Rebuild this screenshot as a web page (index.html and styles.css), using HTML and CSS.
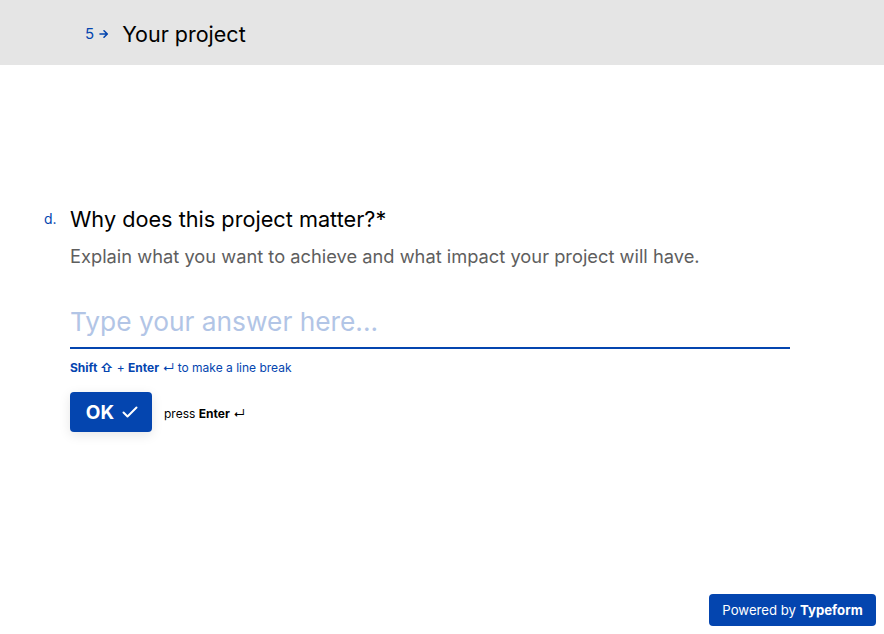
FILE: index.html
```html
<!DOCTYPE html>
<html>
<head>
<meta charset="utf-8">
<link rel="stylesheet" href="styles.css">
</head>
<body>
<header class="topbar">
  <span class="num">5</span>
  <svg class="arrow" width="10" height="10" viewBox="0 0 10 10"><path d="M1 5h7M5 1.8L8.3 5 5 8.2" stroke="#0445af" stroke-width="1.6" fill="none" stroke-linecap="round" stroke-linejoin="round"/></svg>
  <span class="section">Your project</span>
</header>
<main class="question">
  <div class="qrow">
    <span class="qnum">d.</span>
    <div class="qbody">
      <h1 class="title">Why does this project matter?*</h1>
      <p class="desc">Explain what you want to achieve and what impact your project will have.</p>
      <div class="answer">Type your answer here...</div>
      <p class="hint"><b>Shift ⇧</b> + <b>Enter</b> ↵ to make a line break</p>
      <div class="actions">
        <button class="ok">OK
          <svg width="16" height="14" viewBox="0 0 16 14"><path d="M1.5 7.5l4 4L14.5 2.5" stroke="#fff" stroke-width="2" fill="none" stroke-linecap="round" stroke-linejoin="round"/></svg>
        </button>
        <span class="press">press <b>Enter</b> ↵</span>
      </div>
    </div>
  </div>
</main>
<a class="powered">Powered by <b>Typeform</b></a>
</body>
</html>
```
FILE: styles.css
```css
* { box-sizing: border-box; }
html, body { margin: 0; padding: 0; }
body {
  font-family: Inter, "Noto Sans", sans-serif;
  background: #fff;
  width: 884px;
  height: 634px;
  position: relative;
  overflow: hidden;
  color: #000;
}
.topbar {
  height: 65px;
  background: #e5e5e5;
  display: flex;
  align-items: center;
  padding-left: 85px;
  padding-top: 2px;
}
.num { color: #0445af; font-size: 15px; }
.arrow { margin-left: 5px; margin-right: 13px; }
.section { font-size: 21.5px; }
.question { padding-top: 140px; padding-left: 44px; }
.qrow { display: flex; }
.qnum {
  color: #0445af;
  font-size: 14px;
  width: 26px;
  padding-top: 5px;
}
.qbody { width: 720px; }
.title {
  margin: 0;
  font-weight: 400;
  font-size: 21.7px;
  line-height: 28px;
}
.desc {
  margin: 11px 0 0;
  font-size: 18.3px;
  line-height: 24px;
  color: #5e5e5e;
}
.answer {
  margin-top: 35px;
  font-size: 26.3px;
  line-height: 38px;
  color: #b2c5e6;
  border-bottom: 2px solid #0445af;
  padding-bottom: 6px;
  height: 46px;
}
.hint {
  margin: 11px 0 0;
  font-size: 12px;
  line-height: 16px;
  color: #0445af;
}
.hint b { font-weight: 700; }
.actions {
  display: flex;
  align-items: center;
  margin-top: 16px;
}
.ok {
  width: 82px;
  height: 40px;
  background: #0445af;
  border: none;
  border-radius: 4px;
  color: #fff;
  font-family: Inter, sans-serif;
  font-size: 19px;
  font-weight: 700;
  display: flex;
  align-items: center;
  justify-content: center;
  gap: 8px;
  padding: 0 0 0 2px;
  box-shadow: 0 3px 12px rgba(0,0,0,0.1);
}
.press {
  margin-left: 12px;
  font-size: 12px;
  color: #000;
  padding-top: 2px;
}
.press b { font-weight: 700; }
.powered {
  position: absolute;
  left: 709px;
  top: 594px;
  width: 167px;
  height: 32px;
  background: #0445af;
  border-radius: 4px;
  color: #fff;
  font-size: 13.2px;
  display: flex;
  align-items: center;
  justify-content: center;
}
.powered b { margin-left: 4px; }
```
